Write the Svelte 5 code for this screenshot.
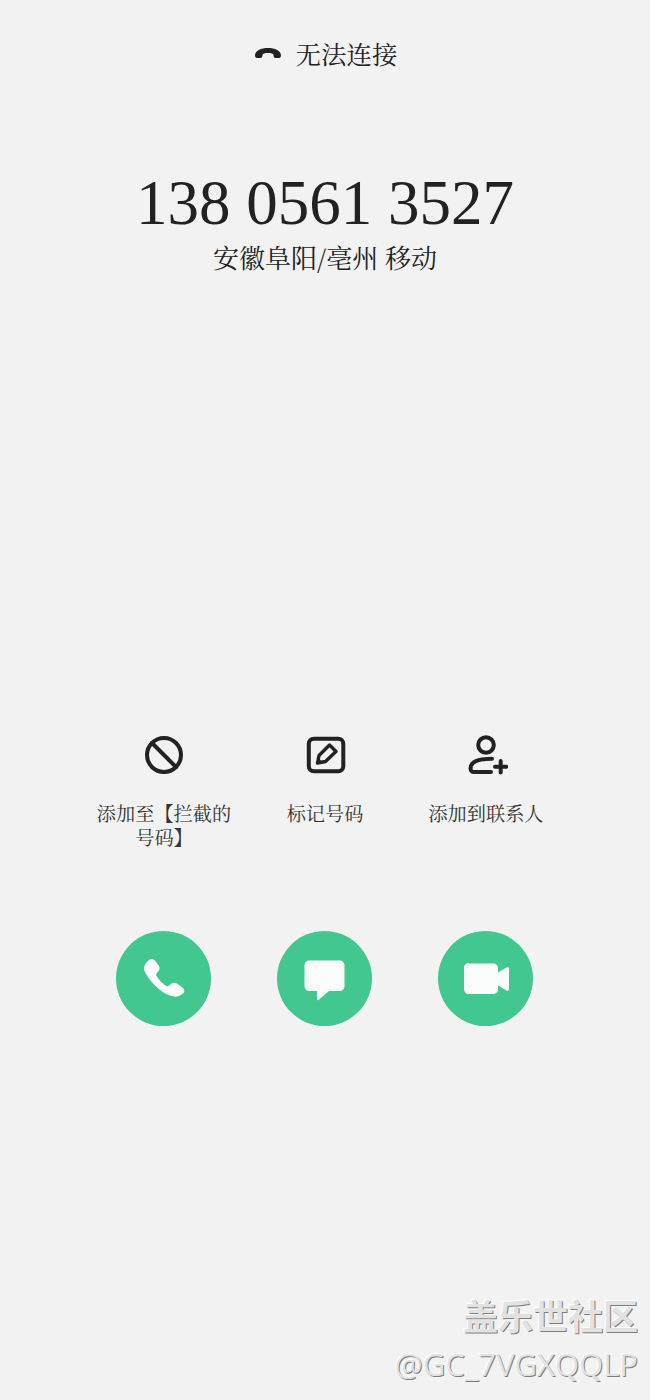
<script lang="ts">
	const actions = [
		{ id: 'block', label: '添加至【拦截的号码】' },
		{ id: 'mark', label: '标记号码' },
		{ id: 'contact', label: '添加到联系人' }
	];
	const calls = ['phone', 'message', 'video'];
</script>

<main class="screen">
	<header class="status">
		<svg class="hangup" viewBox="0 0 28 12" width="28" height="12">
			<path d="M1 8.500C1 3.500 7 1 14 1s13 2.500 13 7.500c0 1.400-.8 2.500-2 2.500h-3.500c-1.200 0-2-1-2-2.200V8c0-1.500-2.500-2-5.500-2s-5.500.5-5.500 2v.8c0 1.200-.8 2.200-2 2.200H3c-1.200 0-2-1.100-2-2.500z" />
		</svg>
		<span>无法连接</span>
	</header>

	<section class="caller">
		<h1>138 0561 3527</h1>
		<p>安徽阜阳/亳州 移动</p>
	</section>

	<section class="actions">
		{#each actions as a (a.id)}
			<div class="action">
				<svg viewBox="0 0 44 44" width="44" height="44">
					{#if a.id === 'block'}
						<circle cx="22" cy="22" r="17" class="stroke" />
						<path d="M10 10l24 24" class="stroke" />
					{:else if a.id === 'mark'}
						<rect x="5.800" y="5.800" width="34.500" height="32.500" rx="5" class="stroke" />
						<path d="M14.500 30l1.500-7.500L26.500 12l6.500 6.500L22.500 28.500z" class="outline" />
						<path d="M13 31.500l1.800-7 5 5z" class="solid" />
					{:else}
						<circle cx="22" cy="12" r="7.800" class="stroke" />
						<path d="M27 39H10c-2 0-3.500-1.500-3.500-3.500C6.500 29 13 25.800 28 25.800" class="stroke" />
						<path d="M36.700 28v11.400M31 33.700h11.400" class="stroke" />
					{/if}
				</svg>
				<span class="label">{a.label}</span>
			</div>
		{/each}
	</section>

	<section class="calls">
		{#each calls as c}
			<button type="button" aria-label={c}>
				<svg viewBox="0 0 48 48" width="48" height="48">
					{#if c === 'phone'}
						<path d="M9 5c1.500-1.500 4-1.500 5.500.2l4 5c1.500 1.800 1.500 3.800.2 5.500l-2 2.500c-.7 1-.7 2-.1 3 2.500 4 5.500 7 9.500 9.600 1 .6 2 .6 3-.2l2.500-2c1.700-1.300 3.500-1.300 5.300 0l5.800 4.200c2 1.500 2.200 3.800.5 5.500-3 3-7 4-10.500 3C20.500 38.500 8.500 25 4.500 16 3 12 5 8.500 9 5z" />
					{:else if c === 'message'}
						<path d="M8.500 5.500h30c3 0 5 2 5 5v20.500c0 3-2 5-5 5H28l-10.500 9c-.8.600-1.500.2-1.500-.7V36H8.500c-3 0-5-2-5-5V10.500c0-3 2-5 5-5z" />
					{:else}
						<path d="M7 8.500h24c3 0 5 2 5 5v4l8.500-5c1.300-.7 2.500 0 2.500 1.500v20c0 1.500-1.200 2.200-2.500 1.500l-8.500-5v3.500c0 3-2 5-5 5H7c-3 0-5-2-5-5v-21c0-3 2-5 5-5z" />
					{/if}
				</svg>
			</button>
		{/each}
	</section>

	<aside class="watermark">
		<strong>盖乐世社区</strong>
		<span>@GC_7VGXQQLP</span>
	</aside>
</main>

<style>
	:global(body) {
		margin: 0;
		background: #f2f2f2;
	}

	.screen {
		position: relative;
		height: 1400px;
		overflow: hidden;
		background: #f2f2f2;
		color: #222;
		font-family: 'Noto Serif CJK SC', 'Liberation Serif', 'Noto Sans CJK SC', serif;
	}

	.status {
		display: flex;
		justify-content: center;
		align-items: center;
		gap: 13px;
		padding-top: 37px;
		padding-left: 2px;
		font-size: 25.5px;
		line-height: 32px;
	}

	.hangup {
		fill: #222;
	}

	.caller {
		margin-top: 98px;
		text-align: center;
	}

	h1 {
		margin: 0;
		font-family: 'Liberation Serif', serif;
		font-size: 63px;
		font-weight: 400;
		line-height: 72px;
	}

	.caller p {
		margin: 1px 0 0;
		font-size: 26px;
		line-height: 34px;
	}

	.actions {
		display: grid;
		grid-template-columns: repeat(3, 161px);
		justify-content: center;
		margin-top: 459px;
	}

	.action {
		display: flex;
		flex-direction: column;
		align-items: center;
		height: 198px;
	}

	.label {
		margin-top: 24px;
		width: 140px;
		font-size: 19.2px;
		line-height: 24px;
		text-align: center;
		color: #333;
	}

	.stroke {
		fill: none;
		stroke: #222;
		stroke-width: 4;
		stroke-linecap: round;
		stroke-linejoin: round;
	}

	.outline {
		fill: none;
		stroke: #222;
		stroke-width: 3.4;
		stroke-linejoin: round;
	}

	.solid {
		fill: #222;
	}

	.calls {
		display: grid;
		grid-template-columns: repeat(3, 161px);
		justify-content: center;
		justify-items: center;
		padding-right: 1px;
	}

	.calls button {
		display: flex;
		align-items: center;
		justify-content: center;
		width: 95px;
		height: 95px;
		padding: 0;
		border: 0;
		border-radius: 50%;
		background: #41c78f;
	}

	.calls svg {
		fill: #fbfdfc;
	}

	.watermark {
		position: absolute;
		right: 12px;
		bottom: 18px;
		display: flex;
		flex-direction: column;
		align-items: flex-end;
		gap: 10px;
		font-family: 'Open Sans', 'Noto Sans CJK SC', sans-serif;
		color: #e2e2e2;
		text-shadow: 1px 1px 0 #7d7d7d, -1px -1px 0 #fff;
	}

	.watermark strong {
		font-family: 'Noto Sans CJK SC', sans-serif;
		font-size: 35px;
		font-weight: 700;
		line-height: 42px;
	}

	.watermark span {
		font-size: 31px;
		line-height: 36px;
	}
</style>
